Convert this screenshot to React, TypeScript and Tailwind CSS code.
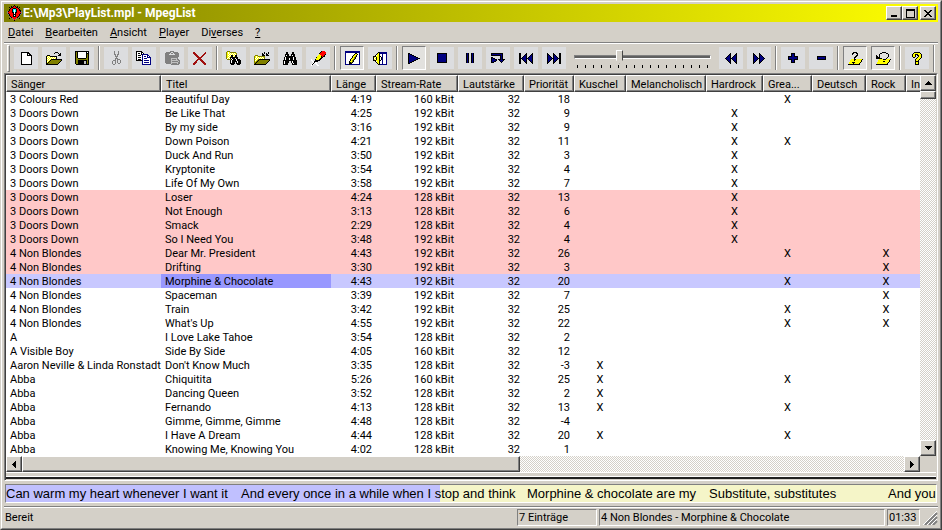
import React, { useState } from "react";
import clsx from "clsx";

const COLORS: Record<string, string> = {
  k: "#000000",
  w: "#ffffff",
  o: "#808000",
  y: "#ffff00",
  g: "#808080",
  l: "#c0c0c0",
  n: "#000080",
  r: "#ff0000",
  m: "#a01010",
  c: "#00ffff",
};

// every string is one pixel row, "." is transparent
const ICONS: Record<string, string[]> = {
  app: [
    ".......k........",
    "....k.krk.k.....",
    "..k.kkrrrkk.k...",
    "...krrkkkrrk....",
    "..krrkccckrrk...",
    "..krrkcwckrrkk..",
    "gkrrrkcwckrrrkg.",
    "grrrrkkwkkrrrrg.",
    "gkrrrrkwkrrrrkg.",
    ".gkrrrkkkrrrkg..",
    "..krrrkwkrrrk...",
    "..gkrrkkkrrkg...",
    "...gkrrrrrkg....",
    "..k..grrrg..k...",
    "......grg.......",
    ".......k........",
  ],
  new: [
    "kkkkkkkk...",
    "kwwwwwkkk..",
    "kwwwwwkwkk.",
    "kwwwwwkkkkk",
    "kwwwwwwwwwk",
    "kwwwwwwwwwk",
    "kwwwwwwwwwk",
    "kwwwwwwwwwk",
    "kwwwwwwwwwk",
    "kwwwwwwwwwk",
    "kwwwwwwwwwk",
    "kwwwwwwwwwk",
    "kkkkkkkkkkk",
  ],
  open: [
    ".........kkk....",
    "........k...k.k.",
    ".............kk.",
    ".kkk........kkk.",
    "kywykkkkkkk.....",
    "kwywywywywk.....",
    "kywywywywyk.....",
    "kwywykkkkkkkkkkk",
    "kywykooooooooook",
    "kwykooooooooook.",
    "kykooooooooook..",
    "kkooooooooook...",
    "kkkkkkkkkkkk....",
  ],
  save: [
    "kkkkkkkkkkkkkk",
    "kokwwwwwwwwkwk",
    "kokwwwwwwwwkkk",
    "kokwwwwwwwwkok",
    "kokwwwwwwwwkok",
    "kokwwwwwwwwkok",
    "kokwwwwwwwwkok",
    "kookkkkkkkkook",
    "kooooooooooook",
    "kookkkkkkkkkok",
    "kookkkkkkllkok",
    "kookkkkkkllkok",
    "kookkkkkkllkok",
    ".kkkkkkkkkkkkk",
  ],
  cut: [
    "..g...g..",
    "..g...g..",
    "..g...g..",
    "..gg.gg..",
    "...g.g...",
    "...ggg...",
    "....g....",
    "...ggg...",
    "...g.ggg.",
    ".ggg.g..g",
    "g..g.g..g",
    "g..g.g..g",
    "g..g..gg.",
    ".gg......",
  ],
  copy: [
    "kkkkkk..........",
    "kwwwwkk.........",
    "kwkkwkwk........",
    "kwwwwknnnnnn....",
    "kwkkkwnwwwwnn...",
    "kwwwwwnwnnwnwn..",
    "kwkkkwnwwwwnnnn.",
    "kwwwwwnwnnnwwwn.",
    "kwkkkwnwwwwwwwn.",
    "kkkkkknwnnnnnwn.",
    "......nwwwwwwwn.",
    "......nwnnnnnwn.",
    "......nwwwwwwwn.",
    "......nnnnnnnnn.",
  ],
  paste: [
    ".....gggg......",
    ".ggggg..ggggg..",
    "ggggg.gg.ggggg.",
    "gggg......gggg.",
    "gggggggggggggg.",
    "gggggggggggggg.",
    "ggggggggggggg..",
    "ggggggllllllg..",
    "gggggglgggglgg.",
    "gggggglllllllgg",
    "gggggglgggggglg",
    "gggggglllllllgg",
    ".ggggglggggglgg",
    "......gggggggg.",
  ],
  remove: [
    "mm..........m.",
    "mmm........mm.",
    ".mmm......mm..",
    "..mmm....mm...",
    "...mmm..mm....",
    "....mmmmm.....",
    ".....mmm......",
    "....mmmmm.....",
    "...mm..mmm....",
    "..mm....mmm...",
    ".mmm.....mmm..",
    "mmm.......mmm.",
    "mm.........mm.",
  ],
  findFolder: [
    ".ooo............",
    "oywyoooooo......",
    "oywywywywyo.....",
    "oyywywywywo.....",
    "oywywkkywkk.....",
    "oyywykkwykk.....",
    "oywykkkkkkkk....",
    "owywkwkkkwkk....",
    ".ooookwkkkwkkk..",
    "....kwkkkkwkkkk.",
    "....kwkkkkkwkkk.",
    "....kwkkk.kwkkk.",
    "....kkkkk.kkkkk.",
    ".....kkk...kkk..",
  ],
  importFolder: [
    "..........k...k.",
    "........k.k.k.k.",
    "........kk..kk..",
    ".ooo....kkk.kkk.",
    "oywyooooooo.....",
    "oywywywywyo.....",
    "owywywywywo.....",
    "oywyokkkkkkkkkkk",
    "owyokooooooooook",
    "oyokooooooooook.",
    "ookooooooooook..",
    "okooooooooook...",
    "kkkkkkkkkkkk....",
  ],
  find: [
    "...kk....kk....",
    "...kk....kk....",
    "..kkkk..kkkk...",
    "..kwkk..kwkk...",
    "..kkkkkkkkkk...",
    ".kwkkkkkkkwkk..",
    ".kwkkkwkkkwkk..",
    ".kwkkkwkkkwkk..",
    "kkkkkkkkkkkkkk.",
    "kwkkkk..kwkkkk.",
    "kwkkkk..kwkkkk.",
    "kwkkk....kwkkk.",
    "kkkkk....kkkkk.",
  ],
  pen: [
    "..........krrr.",
    ".........krrrrr",
    "........krrrrrr",
    "........yrrrrrk",
    ".......yyyrrrk.",
    "......yyyykrkk.",
    ".....kyyyykk...",
    ".....yyyykk....",
    "w...kyyykk.....",
    "ww..kkkkk......",
    ".wwkkkk........",
    "..wkww.........",
    ".wkwww.........",
    "wkw..ww........",
    "w.....ww.......",
  ],
  edit: [
    "nnnnnnnnnnnnnnn",
    "nnnnnnnnnnnnnnn",
    "nwwwwwwwwwkkwwn",
    "nwwwwwwwwkyykwn",
    "nwwwwwwwkyykwwn",
    "nwwwwwwkyyokwwn",
    "nwwwwwwkyokwwwn",
    "nwwwwwkyyokwwwn",
    "nwwwwkyyokwwwwn",
    "nwwwwkyokwwwwwn",
    "nwwwkyyokwwwwwn",
    "nwwwkkokwwwwwwn",
    "nwwwkkkwwwwwwwn",
    "nnnnknnnnnnnnnn",
  ],
  sound: [
    ".....kknnnnnnn.",
    "....kyknnnnnnn.",
    "...kyykwwnwwwn.",
    "..kwyykwwnwwwn.",
    "kkkyyykkwnwwwn.",
    "kywkyykwknwwwn.",
    "kwykyykwknwwwn.",
    "kywkyykwknwwwn.",
    "kkkyyykkwnwwwn.",
    "..kwyykwwnwwwn.",
    "...kyykwwnwwwn.",
    "....kykwwnwwwn.",
    ".....kknnnnnnn.",
  ],
  play: [
    "kk..........",
    "knkk........",
    "knnnkk......",
    "knnnnnkk....",
    "knnnnnnnkk..",
    "knnnnnnnnnkk",
    "knnnnnnnkk..",
    "knnnnnkk....",
    "knnnkk......",
    "knkk........",
    "kk..........",
  ],
  stop: [
    "kkkkkkkkkk",
    "knnnnnnnnk",
    "knnnnnnnnk",
    "knnnnnnnnk",
    "knnnnnnnnk",
    "knnnnnnnnk",
    "knnnnnnnnk",
    "knnnnnnnnk",
    "knnnnnnnnk",
    "kkkkkkkkkk",
  ],
  pause: [
    "knk..knk",
    "knk..knk",
    "knk..knk",
    "knk..knk",
    "knk..knk",
    "knk..knk",
    "knk..knk",
    "knk..knk",
    "knk..knk",
    "knk..knk",
  ],
  loop: [
    "kkkkkkkkkkkk..",
    "knnnnnnnnnnk..",
    "kkkkkkkkkknk..",
    ".........knk..",
    "kk.......knk..",
    "knkk.....knk..",
    "knnnkk.kkknkkk",
    "knnnnk..knnnk.",
    "knnkk....knk..",
    "kkk.......k...",
  ],
  prev: [
    "kk.....k.....k",
    "kk....kk....kk",
    "kk...knk...knk",
    "kk..knnk..knnk",
    "kk.knnnk.knnnk",
    "kkknnnnkknnnnk",
    "kk.knnnk.knnnk",
    "kk..knnk..knnk",
    "kk...knk...knk",
    "kk....kk....kk",
    "kk.....k.....k",
  ],
  next: [
    "k.....k.....kk",
    "kk....kk....kk",
    "knk...knk...kk",
    "knnk..knnk..kk",
    "knnnk.knnnk.kk",
    "knnnnkknnnnkkk",
    "knnnk.knnnk.kk",
    "knnk..knnk..kk",
    "knk...knk...kk",
    "kk....kk....kk",
    "k.....k.....kk",
  ],
  rewind: [
    ".....k.....k",
    "....kk....kk",
    "...knk...knk",
    "..knnk..knnk",
    ".knnnk.knnnk",
    "knnnnkknnnnk",
    ".knnnk.knnnk",
    "..knnk..knnk",
    "...knk...knk",
    "....kk....kk",
    ".....k.....k",
  ],
  forward: [
    "k.....k.....",
    "kk....kk....",
    "knk...knk...",
    "knnk..knnk..",
    "knnnk.knnnk.",
    "knnnnkknnnnk",
    "knnnk.knnnk.",
    "knnk..knnk..",
    "knk...knk...",
    "kk....kk....",
    "k.....k.....",
  ],
  plus: [
    "...kkkk...",
    "...knnk...",
    "...knnk...",
    "kkkknnkkkk",
    "knnnnnnnnk",
    "knnnnnnnnk",
    "kkkknnkkkk",
    "...knnk...",
    "...knnk...",
    "...kkkk...",
  ],
  minus: ["kkkkkkkkk", "knnnnnnnk", "knnnnnnnk", "kkkkkkkkk"],
  hint: [
    ".....kkkk......",
    "....kk..kk.....",
    "....k....k.....",
    "........kk.....",
    ".......kk......",
    "......kk.......",
    "......k........",
    "...yyykkyyyyyyk",
    "..yyyykyyyyyyk.",
    "..yyyyyyyyyyyk.",
    ".yyykkkyyyyyk..",
    ".yyyykyyyyyk...",
    "kkkkkkkkkkkk...",
  ],
  repeat: [
    "......kkkk.....",
    "....kk....kk...",
    "...k........k..",
    "k..k........k..",
    "kk.k........k..",
    "kkkk.......k...",
    "kkkkkk....k....",
    "...yyyykkkyyyyk",
    "..yyyyyyyyyyyk.",
    "..yyyyykkyyyyk.",
    ".yyyyyyyyyyyk..",
    ".yyyyyyyyyyk...",
    "kkkkkkkkkkkk...",
  ],
  help: [
    "..kkkkkk..",
    ".kyyyyyyk.",
    "kyykkkyyyk",
    "kyyk.kkyyk",
    "kyyk..kyyk",
    ".kk..kyyyk",
    "....kyyyk.",
    "...kyyyk..",
    "...kyyk...",
    "...kkkk...",
    "...kyyk...",
    "...kyyk...",
    "...kkkk...",
  ],
  minimize: ["......", "......", "......", "......", "......", "......", "kkkkkk", "kkkkkk"],
  maximize: [
    "kkkkkkkkk",
    "kkkkkkkkk",
    "k.......k",
    "k.......k",
    "k.......k",
    "k.......k",
    "k.......k",
    "k.......k",
    "kkkkkkkkk",
  ],
  close: [
    "kk....kk",
    ".kk..kk.",
    "..kkkk..",
    "...kk...",
    "..kkkk..",
    ".kk..kk.",
    "kk....kk",
  ],
  up: ["...k...", "..kkk..", ".kkkkk.", "kkkkkkk"],
  down: ["kkkkkkk", ".kkkkk.", "..kkk..", "...k..."],
  left: ["...k", "..kk", ".kkk", "kkkk", ".kkk", "..kk", "...k"],
  right: ["k...", "kk..", "kkk.", "kkkk", "kkk.", "kk..", "k..."],
};

function Icon({ name }: { name: string }) {
  const rows = ICONS[name];
  return (
    <svg
      width={rows[0].length}
      height={rows.length}
      shapeRendering="crispEdges"
      className="shrink-0"
      aria-hidden="true"
    >
      {rows.map((row, y) =>
        row
          .split("")
          .map((c, x) =>
            c === "." ? null : (
              <rect key={x + "-" + y} x={x} y={y} width={1} height={1} fill={COLORS[c]} />
            )
          )
      )}
    </svg>
  );
}

const RAISED =
  "flex items-center justify-center border border-t-white border-l-white border-r-[#404040] border-b-[#404040] bg-[#d4d0c8] shadow-[inset_-1px_-1px_0_#808080]";
const SUNKEN = "border border-t-[#808080] border-l-[#808080] border-r-white border-b-white";
const TRACK =
  "bg-[conic-gradient(#ffffff_25%,#d4d0c8_0_50%,#ffffff_0_75%,#d4d0c8_0)] bg-[length:2px_2px]";

function ToolButton({ icon, label, pressed }: { icon: string; label: string; pressed?: boolean }) {
  return (
    <button
      aria-label={label}
      title={label}
      className={clsx(
        "flex w-6 shrink-0 items-center justify-center",
        pressed
          ? "h-6 border border-t-[#808080] border-l-[#808080] border-r-white border-b-white bg-[#e2e1de]"
          : "h-[22px] bg-[#dcdddf]"
      )}
    >
      <Icon name={icon} />
    </button>
  );
}

function Divider() {
  return <div className="h-6 w-[2px] shrink-0 border-l border-l-[#808080] bg-white" />;
}

const menu = [
  ["", "D", "atei"],
  ["", "B", "earbeiten"],
  ["", "A", "nsicht"],
  ["", "P", "layer"],
  ["Di", "v", "erses"],
  ["", "?", ""],
];

const columns = [
  { title: "Sänger", width: "w-[155px]" },
  { title: "Titel", width: "w-[170px]" },
  { title: "Länge", width: "w-[45px]" },
  { title: "Stream-Rate", width: "w-[82px]" },
  { title: "Lautstärke", width: "w-[66px]" },
  { title: "Priorität", width: "w-[50px]" },
  { title: "Kuschel", width: "w-[52px]" },
  { title: "Melancholisch", width: "w-[80px]" },
  { title: "Hardrock", width: "w-[57px]" },
  { title: "Grea...", width: "w-[49px]" },
  { title: "Deutsch", width: "w-[54px]" },
  { title: "Rock", width: "w-[40px]" },
  { title: "In", width: "w-[20px]" },
];

const categories = ["K", "M", "H", "G", "D", "R", "I"];

type Song = [string, string, string, number, number, string];

const songs: Song[] = [
  ["3 Colours Red", "Beautiful Day", "4:19", 160, 18, "G"],
  ["3 Doors Down", "Be Like That", "4:25", 192, 9, "H"],
  ["3 Doors Down", "By my side", "3:16", 192, 9, "H"],
  ["3 Doors Down", "Down Poison", "4:21", 192, 11, "HG"],
  ["3 Doors Down", "Duck And Run", "3:50", 192, 3, "H"],
  ["3 Doors Down", "Kryptonite", "3:54", 192, 4, "H"],
  ["3 Doors Down", "Life Of My Own", "3:58", 192, 7, "H"],
  ["3 Doors Down", "Loser", "4:24", 128, 13, "H"],
  ["3 Doors Down", "Not Enough", "3:13", 128, 6, "H"],
  ["3 Doors Down", "Smack", "2:29", 128, 4, "H"],
  ["3 Doors Down", "So I Need You", "3:48", 192, 4, "H"],
  ["4 Non Blondes", "Dear Mr. President", "4:43", 192, 26, "GR"],
  ["4 Non Blondes", "Drifting", "3:30", 192, 3, "R"],
  ["4 Non Blondes", "Morphine & Chocolate", "4:43", 192, 20, "GR"],
  ["4 Non Blondes", "Spaceman", "3:39", 192, 7, "R"],
  ["4 Non Blondes", "Train", "3:42", 192, 25, "GR"],
  ["4 Non Blondes", "What's Up", "4:55", 192, 22, "GR"],
  ["A", "I Love Lake Tahoe", "3:54", 128, 2, ""],
  ["A Visible Boy", "Side By Side", "4:05", 160, 12, ""],
  ["Aaron Neville & Linda Ronstadt", "Don't Know Much", "3:35", 128, -3, "K"],
  ["Abba", "Chiquitita", "5:26", 160, 25, "KG"],
  ["Abba", "Dancing Queen", "3:52", 128, 2, "K"],
  ["Abba", "Fernando", "4:13", 128, 13, "KG"],
  ["Abba", "Gimme, Gimme, Gimme", "4:48", 128, -4, ""],
  ["Abba", "I Have A Dream", "4:44", 128, 20, "KG"],
  ["Abba", "Knowing Me, Knowing You", "4:02", 128, 1, ""],
];

function SongTable() {
  const [selected, setSelected] = useState(13);

  return (
    <div className="min-w-0 flex-1 overflow-hidden bg-white">
      <table className="w-[920px] table-fixed border-collapse">
        <thead>
          <tr>
            {columns.map((col) => (
              <th key={col.title} className={clsx("p-0 font-normal", col.width)}>
                <button
                  className={clsx(RAISED, "h-[17px] w-full justify-start! overflow-hidden pt-[2px] pl-1 whitespace-nowrap")}
                >
                  {col.title}
                </button>
              </th>
            ))}
          </tr>
        </thead>
        <tbody>
          {songs.map(([artist, title, length, rate, priority, marks], i) => (
            <tr
              key={i}
              onClick={() => setSelected(i)}
              className={clsx(
                "h-[14px] leading-[12px] whitespace-nowrap",
                i === selected ? "bg-[#c8c8ff]" : i >= 7 && i <= 12 && "bg-[#ffc8c8]"
              )}
            >
              <td className="p-0 pt-[2px] pl-1">{artist}</td>
              <td className={clsx("p-0 pt-[2px] pl-1", i === selected && "bg-[#9898ff]")}>{title}</td>
              <td className="p-0 pt-[2px] pr-1 text-right">{length}</td>
              <td className="p-0 pt-[2px] pr-1 text-right">{rate} kBit</td>
              <td className="p-0 pt-[2px] pr-1 text-right">32</td>
              <td className="p-0 pt-[2px] pr-1 text-right">{priority}</td>
              {categories.map((c) => (
                <td key={c} className="p-0 pt-[2px] text-center">
                  {marks.includes(c) ? "X" : ""}
                </td>
              ))}
            </tr>
          ))}
        </tbody>
      </table>
    </div>
  );
}

function Lyrics() {
  const progress = 46.7;
  return (
    <div
      className={clsx(
        SUNKEN,
        "mx-px mt-[3px] flex h-[19px] items-center overflow-hidden font-['Liberation_Sans',Arial,sans-serif] text-[13px] leading-4 whitespace-nowrap"
      )}
      style={{
        background: `linear-gradient(90deg, #c0c0ff ${progress}%, #f5f5c8 ${progress}%)`,
      }}
    >
      <span className="w-[235px] shrink-0">Can warm my heart whenever I want it</span>
      <span className="w-[286px] shrink-0">And every once in a while when I stop and think</span>
      <span className="w-[182px] shrink-0">Morphine &amp; chocolate are my</span>
      <span className="w-[179px] shrink-0">Substitute, substitutes</span>
      <span className="shrink-0">And you</span>
    </div>
  );
}

export default function App() {
  const [position, setPosition] = useState(32);

  return (
    <div className="w-full border border-t-[#d4d0c8] border-l-[#d4d0c8] border-r-[#404040] border-b-[#404040] bg-[#d4d0c8] font-[Roboto,Tahoma,sans-serif] text-[11px] leading-[14px] text-black select-none">
      <div className="border border-t-white border-l-white border-r-[#808080] border-b-[#808080] p-[2px]">
        {/* title bar */}
        <div className="flex h-[18px] items-center bg-linear-to-r/srgb from-[#808000] to-[#ffff00] pr-[2px] pl-[3px]">
          <Icon name="app" />
          <h1 className="flex-1 text-[12px] font-bold text-white">E:\Mp3\PlayList.mpl - MpegList</h1>
          <button aria-label="Minimieren" className={clsx(RAISED, "h-[14px] w-4")}>
            <Icon name="minimize" />
          </button>
          <button aria-label="Maximieren" className={clsx(RAISED, "h-[14px] w-4")}>
            <Icon name="maximize" />
          </button>
          <button aria-label="Schließen" className={clsx(RAISED, "ml-[2px] h-[14px] w-4")}>
            <Icon name="close" />
          </button>
        </div>

        {/* menu */}
        <nav className="flex h-5 items-center gap-3 px-1 pt-[2px]">
          {menu.map(([before, key, after]) => (
            <button key={key}>
              {before}
              <span className="underline">{key}</span>
              {after}
            </button>
          ))}
        </nav>

        {/* toolbar */}
        <div className="flex h-[31px] items-center gap-1 overflow-hidden border-t border-t-[#808080] px-[3px] shadow-[inset_0_1px_0_#ffffff]">
          <div className="h-[27px] w-[3px] shrink-0 border border-t-white border-l-white border-r-[#808080] border-b-[#808080]" />
          <ToolButton icon="new" label="Neu" />
          <ToolButton icon="open" label="Öffnen" />
          <ToolButton icon="save" label="Speichern" />
          <Divider />
          <ToolButton icon="cut" label="Ausschneiden" />
          <ToolButton icon="copy" label="Kopieren" />
          <ToolButton icon="paste" label="Einfügen" />
          <ToolButton icon="remove" label="Löschen" />
          <Divider />
          <ToolButton icon="findFolder" label="Ordner durchsuchen" />
          <ToolButton icon="importFolder" label="Importieren" />
          <ToolButton icon="find" label="Suchen" />
          <ToolButton icon="pen" label="Markieren" />
          <Divider />
          <ToolButton icon="edit" label="Bearbeiten" pressed />
          <ToolButton icon="sound" label="Ton" />
          <Divider />
          <ToolButton icon="play" label="Abspielen" pressed />
          <ToolButton icon="stop" label="Stopp" />
          <ToolButton icon="pause" label="Pause" />
          <ToolButton icon="loop" label="Schleife" />
          <ToolButton icon="prev" label="Zurück" />
          <ToolButton icon="next" label="Weiter" />
          <div className="mx-1 flex min-w-[130px] flex-1 flex-col">
            <input
              type="range"
              aria-label="Position"
              min={0}
              max={100}
              value={position}
              onChange={(e) => setPosition(Number(e.target.value))}
              className="h-4 w-full appearance-none bg-transparent [&::-webkit-slider-runnable-track]:h-1 [&::-webkit-slider-runnable-track]:border [&::-webkit-slider-runnable-track]:border-t-[#808080] [&::-webkit-slider-runnable-track]:border-r-white [&::-webkit-slider-runnable-track]:border-b-white [&::-webkit-slider-runnable-track]:border-l-[#808080] [&::-webkit-slider-runnable-track]:bg-[#606060] [&::-webkit-slider-thumb]:-mt-1.5 [&::-webkit-slider-thumb]:h-3.5 [&::-webkit-slider-thumb]:w-[7px] [&::-webkit-slider-thumb]:appearance-none [&::-webkit-slider-thumb]:border [&::-webkit-slider-thumb]:border-t-white [&::-webkit-slider-thumb]:border-r-[#404040] [&::-webkit-slider-thumb]:border-b-[#404040] [&::-webkit-slider-thumb]:border-l-white [&::-webkit-slider-thumb]:bg-[#d4d0c8] [&::-webkit-slider-thumb]:[clip-path:polygon(0_0,100%_0,100%_75%,50%_100%,0_75%)]"
            />
            <div className="flex h-[3px] justify-between px-[3px]">
              {Array.from({ length: 17 }, (_, i) => (
                <span key={i} className="w-px bg-black" />
              ))}
            </div>
          </div>
          <ToolButton icon="rewind" label="Zurückspulen" />
          <ToolButton icon="forward" label="Vorspulen" />
          <Divider />
          <ToolButton icon="plus" label="Lauter" />
          <ToolButton icon="minus" label="Leiser" />
          <Divider />
          <ToolButton icon="hint" label="Zufall" pressed />
          <ToolButton icon="repeat" label="Wiederholen" pressed />
          <Divider />
          <ToolButton icon="help" label="Hilfe" />
          <div className="h-[27px] w-[2px] shrink-0 border-l border-l-[#808080] bg-white" />
        </div>

        {/* play list */}
        <div className={clsx(SUNKEN)}>
          <div className="border-t border-l border-r border-t-[#404040] border-l-[#404040] border-r-[#d4d0c8]">
            <div className="flex">
              <SongTable />
              <div className={clsx(TRACK, "flex w-4 shrink-0 flex-col")}>
                <button aria-label="Nach oben" className={clsx(RAISED, "h-4 w-4")}>
                  <Icon name="up" />
                </button>
                <div className={clsx(RAISED, "h-2 w-4")} />
                <button aria-label="Nach unten" className={clsx(RAISED, "mt-auto h-4 w-4")}>
                  <Icon name="down" />
                </button>
              </div>
            </div>
            <div className="flex h-4">
              <div className={clsx(TRACK, "flex min-w-0 flex-1")}>
                <button aria-label="Nach links" className={clsx(RAISED, "h-4 w-4")}>
                  <Icon name="left" />
                </button>
                <div className={clsx(RAISED, "h-4 w-[54.5%]")} />
                <button aria-label="Nach rechts" className={clsx(RAISED, "ml-auto h-4 w-4")}>
                  <Icon name="right" />
                </button>
              </div>
              <div className="w-4 shrink-0" />
            </div>
            <div className="h-[5px] border-t border-b border-t-white border-b-white" />
            <div className="h-[2px] bg-[#202020]" />
            <div className="h-px" />
          </div>
        </div>

        <Lyrics />

        {/* status bar */}
        <footer className="mt-[3px] flex items-center gap-[2px] border-t border-t-[#808080] pt-[2px] leading-4 shadow-[inset_0_1px_0_#ffffff]">
          <span className="flex-1 pl-px">Bereit</span>
          <span className={clsx(SUNKEN, "h-[17px] w-20 pl-px")}>7 Einträge</span>
          <span className={clsx(SUNKEN, "h-[17px] w-[286px] pl-px")}>
            4 Non Blondes - Morphine &amp; Chocolate
          </span>
          <span className={clsx(SUNKEN, "h-[17px] w-[33px] pl-px")}>01:33</span>
          <svg width="16" height="14" className="shrink-0" aria-hidden="true">
            <path d="M3 14 15 2M7 14 15 6M11 14 15 10" stroke="#808080" strokeWidth="2" />
            <path d="M1 14 15 0M5 14 15 4M9 14 15 8" stroke="#ffffff" strokeWidth="1" />
          </svg>
        </footer>
      </div>
    </div>
  );
}
